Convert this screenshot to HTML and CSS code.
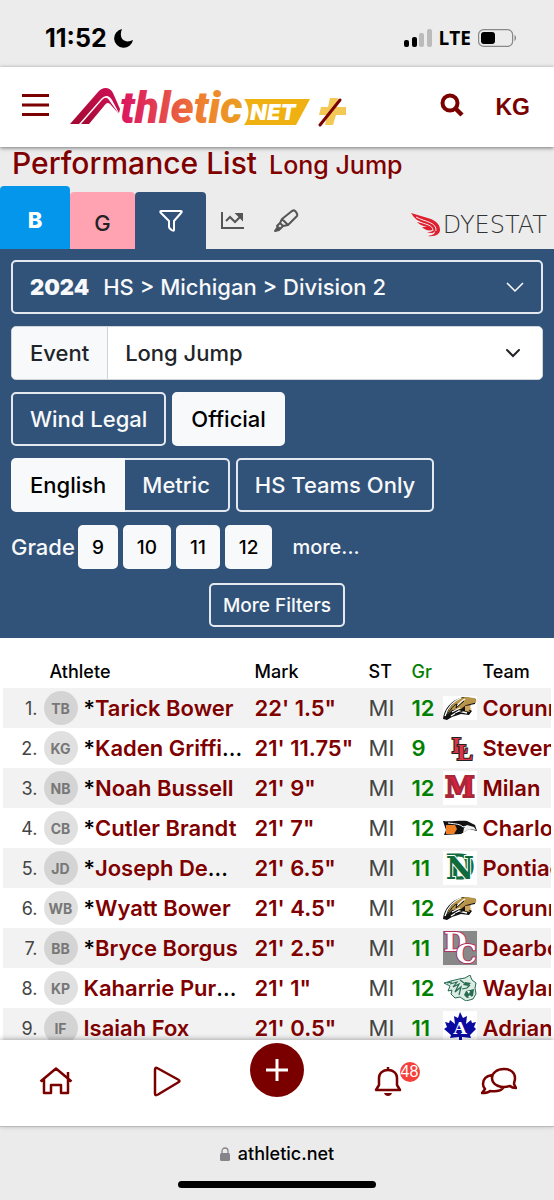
FILE: index.html
```html
<!DOCTYPE html>
<html lang="en">
<head>
  <meta charset="UTF-8">
  <meta name="viewport" content="width=device-width, initial-scale=1">
  <title>Performance List - Long Jump</title>
  <link rel="stylesheet" href="styles.css">
</head>
<body>

  <!-- shared team logos -->
  <svg class="defs" width="0" height="0" aria-hidden="true">
    <symbol id="cavalier" viewBox="0 0 34 24">
      <path fill="#fff" d="M0 0h34v24H0z"/>
      <path fill="#111" d="M0 23C1 13 8 4 20 1l8 1 5 1-1 5-5 1-1 4 3 2-3 4-8-1-9 3-5 3z"/>
      <path fill="#b8954a" d="M9 9c4-5 8-7 14-8l8 1c3 1 3 5 0 5l-8 2-5 4-9 1-5 5c1-4 2-7 5-10z"/>
      <path fill="none" stroke="#fff" stroke-width="1.3" d="M2 20C5 10 10 5 18 2M14 10c3-4 6-6 8-7M9 16l8-4M8 20l8-5 8 2"/>
      <path fill="#c9a45a" d="M22 10l6-1-1 3 2 1-3 1 1 2-5-1z"/>
      <path fill="none" stroke="#111" stroke-width="1" d="M3 21C8 12 11 9 14 8l-1 4 8-7M12 18l10-4"/>
    </symbol>
  </svg>

  <div class="status-bar">
    <div class="clock">11:52
      <svg width="20" height="20" viewBox="0 0 20 20"><path d="M8 1C4 11 11 16 19 12A9.500 9.500 0 1 1 8 1z"/></svg>
    </div>
    <div class="signal">
      <svg width="28" height="18" viewBox="0 0 28 18">
        <rect x="0" y="11" width="5" height="7" rx="2"/>
        <rect x="8" y="8" width="5" height="10" rx="2"/>
        <rect x="15" y="4" width="5" height="14" rx="2" fill="#bbb"/>
        <rect x="23" y="0" width="5" height="18" rx="2" fill="#bbb"/>
      </svg>
      <span>LTE</span>
      <svg width="39" height="18" viewBox="0 0 39 18">
        <rect x=".6" y=".6" width="34" height="16.800" rx="5" fill="none" stroke="#888" stroke-width="1.200"/>
        <rect x="3" y="3" width="14" height="12" rx="3"/>
        <path d="M36.500 6v6c2-1 2-5 0-6z" fill="#888"/>
      </svg>
    </div>
  </div>

  <header class="top-bar">
    <button class="icon-btn" aria-label="Menu">
      <svg width="27" height="24" viewBox="0 0 27 24"><path d="M0 2.500h27M0 12h27M0 21.500h27" stroke="#7a0000" stroke-width="3"/></svg>
    </button>
    <a class="logo" href="#" aria-label="Athletic.net">
      <svg width="278" height="42" viewBox="0 0 278 42">
        <defs>
          <linearGradient id="word" gradientUnits="userSpaceOnUse" x1="50" y1="0" x2="176" y2="0">
            <stop offset="0" stop-color="#dc1262"/>
            <stop offset=".35" stop-color="#e5484c"/>
            <stop offset=".65" stop-color="#ef8030"/>
            <stop offset="1" stop-color="#eaa31e"/>
          </linearGradient>
          <linearGradient id="mark" x1="0" y1="1" x2="1" y2="0">
            <stop offset="0" stop-color="#a00a32"/>
            <stop offset="1" stop-color="#d01056"/>
          </linearGradient>
        </defs>
        <path fill="url(#mark)" d="M0 38 28 6c5-6 12-5 15 1l7 16-1 4-7-13c-3-5-7-5-11-1L9 38z"/>
        <path fill="url(#mark)" d="M11 38 32 14c3-3 5-3 7 0l10 14-9-10c-2-2-4-1-6 2L19 38z"/>
        <text class="logo-word" x="50" y="37" fill="url(#word)">thletic</text>
        <path fill="#eeb111" d="M174 13h66l-14 26h-52c6-8 6-18 0-26z"/>
        <text class="logo-net" x="180" y="34">NET</text>
        <path fill="#f3c855" d="M260 12h8l-1 9h9v8h-10l-3 10h-8l2-10h-8l2-8h7z"/>
        <path d="M250 39 270 14" stroke="#7a0000" stroke-width="3" stroke-linecap="round"/>
      </svg>
    </a>
    <button class="icon-btn search" aria-label="Search">
      <svg width="24" height="24" viewBox="0 0 24 24" fill="none" stroke="#7a0000"><circle cx="10" cy="10" r="7.500" stroke-width="4"/><path d="m16 16 6 6" stroke-width="4.500"/></svg>
    </button>
    <button class="user">KG</button>
  </header>

  <main>
    <h1>Performance List <small>Long Jump</small></h1>

    <nav class="tabs">
      <a class="tab boys" href="#">B</a>
      <a class="tab girls" href="#">G</a>
      <a class="tab filter" href="#" aria-label="Filters">
        <svg width="24" height="24" viewBox="0 0 24 24" fill="none" stroke="#fff" stroke-width="2" stroke-linejoin="round"><path d="M2 2h20c1 0 1 1 0 2l-7 8v9c0 2-5-1-5-3v-6L2 4C1 3 1 2 2 2z"/></svg>
      </a>
      <a class="tab plain" href="#" aria-label="Progress">
        <svg width="24" height="20" viewBox="0 0 24 20" fill="none" stroke="#555" stroke-width="2"><path d="M1 1v16h22M5 10l4-4 5 5 6-6"/><path d="M16 3h5v5z" fill="#555"/></svg>
      </a>
      <a class="tab plain" href="#" aria-label="Highlight">
        <svg width="26" height="24" viewBox="0 0 26 24" fill="none" stroke="#555" stroke-width="2" stroke-linejoin="round"><path d="M8 10 18 2c2-1 3-1 4 1s2 2 1 4l-9 9-5 1-3-3zM8 10l6 6M6 14l-3 3 3 3 3-3"/><path d="m1 22 2-3 2 2z" fill="#555"/></svg>
      </a>
      <a class="dyestat" href="#">
        <svg width="29" height="24" viewBox="0 0 29 24" aria-hidden="true">
          <path fill="#e01f2e" d="M0 0 20 6c7 3 9 7 9 11 0 4-5 7-12 6 5-1 7-2 7-5-1 2-4 3-8 1 3 0 5 0 6-2-5 1-8 0-11-3h5C11 13 8 11 6 9l5 1C7 8 3 5 0 0z"/>
          <path fill="none" stroke="#ececec" d="M5 4c9 5 21 5 20 14M7 8c7 4 15 3 15 10"/>
        </svg>
        <span>DYESTAT</span>
      </a>
    </nav>

    <section class="filters">
      <button class="btn division"><b>2024</b> HS &gt; Michigan &gt; Division 2
        <svg width="18" height="11" viewBox="0 0 18 11" fill="none" stroke="#fff" stroke-width="1.500"><path d="m1 1 8 8 8-8"/></svg>
      </button>
      <div class="event">
        <label for="event">Event</label>
        <select id="event"><option>Long Jump</option></select>
      </div>
      <div class="row">
        <button class="btn">Wind Legal</button>
        <button class="btn active">Official</button>
      </div>
      <div class="row">
        <div class="group">
          <button class="btn active">English</button>
          <button class="btn">Metric</button>
        </div>
        <button class="btn">HS Teams Only</button>
      </div>
      <div class="row grades">
        <span>Grade</span>
        <button class="btn small active">9</button>
        <button class="btn small active">10</button>
        <button class="btn small active">11</button>
        <button class="btn small active">12</button>
        <a href="#">more...</a>
      </div>
      <button class="btn small more-filters">More Filters</button>
    </section>

    <table class="results">
      <colgroup>
        <col class="c-rank"><col class="c-avatar"><col class="c-name"><col class="c-mark"><col class="c-state"><col class="c-grade"><col class="c-logo"><col>
      </colgroup>
      <thead>
        <tr><th></th><th colspan="2" class="athlete">Athlete</th><th>Mark</th><th>ST</th><th class="gr">Gr</th><th></th><th>Team</th></tr>
      </thead>
      <tbody>
        <tr>
          <td class="rank">1.</td><td><span class="avatar">TB</span></td><td>*<a href="#">Tarick Bower</a></td><td><a href="#">22' 1.5"</a></td><td class="st">MI</td><td class="gr">12</td>
          <td><svg width="34" height="24"><use href="#cavalier"/></svg></td><td><a href="#">Corunna</a></td>
        </tr>
        <tr>
          <td class="rank">2.</td><td><span class="avatar">KG</span></td><td>*<a href="#">Kaden Griffi</a>...</td><td><a href="#">21' 11.75"</a></td><td class="st">MI</td><td class="gr">9</td>
          <td><svg width="34" height="34" viewBox="0 0 34 34"><g class="ll"><text x="9" y="22">L</text><text x="14" y="29">L</text></g></svg></td><td><a href="#">Stevensville</a></td>
        </tr>
        <tr>
          <td class="rank">3.</td><td><span class="avatar">NB</span></td><td>*<a href="#">Noah Bussell</a></td><td><a href="#">21' 9"</a></td><td class="st">MI</td><td class="gr">12</td>
          <td><svg width="34" height="34" viewBox="0 0 34 34"><path fill="#fff" d="M0 0h34v34H0z"/><text class="block-m" x="17" y="26">M</text></svg></td><td><a href="#">Milan</a></td>
        </tr>
        <tr>
          <td class="rank">4.</td><td><span class="avatar">CB</span></td><td>*<a href="#">Cutler Brandt</a></td><td><a href="#">21' 7"</a></td><td class="st">MI</td><td class="gr">12</td>
          <td><svg width="34" height="16" viewBox="0 0 34 16"><path fill="#111" d="M0 1c9 1 17-1 24 0l8 4 2 6-8-2-8 5-17 1 2-5z"/><path fill="#ee7f22" d="m3 5 9 0 2 4-3 5-8 0z"/><path fill="#eee" d="m24 5 7 2 2 3-7-1-6 4 1-5z"/><path fill="none" stroke="#fff" d="M5 3c8 1 12 1 15 4l4-1"/></svg></td><td><a href="#">Charlotte</a></td>
        </tr>
        <tr>
          <td class="rank">5.</td><td><span class="avatar">JD</span></td><td>*<a href="#">Joseph De</a>...</td><td><a href="#">21' 6.5"</a></td><td class="st">MI</td><td class="gr">11</td>
          <td><svg width="34" height="34" viewBox="0 0 34 34"><path fill="#fff" d="M0 0h34v34H0z"/><g class="nd"><text class="d" x="17" y="28">D</text><text class="n" x="17" y="28">N</text></g></svg></td><td><a href="#">Pontiac</a></td>
        </tr>
        <tr>
          <td class="rank">6.</td><td><span class="avatar">WB</span></td><td>*<a href="#">Wyatt Bower</a></td><td><a href="#">21' 4.5"</a></td><td class="st">MI</td><td class="gr">12</td>
          <td><svg width="34" height="24"><use href="#cavalier"/></svg></td><td><a href="#">Corunna</a></td>
        </tr>
        <tr>
          <td class="rank">7.</td><td><span class="avatar">BB</span></td><td>*<a href="#">Bryce Borgus</a></td><td><a href="#">21' 2.5"</a></td><td class="st">MI</td><td class="gr">11</td>
          <td><svg width="34" height="34" viewBox="0 0 34 34"><path fill="#888" d="M0 0h34v34H0z"/><g class="dc"><text x="1" y="20">D</text><text x="13" y="32">C</text></g></svg></td><td><a href="#">Dearborn</a></td>
        </tr>
        <tr>
          <td class="rank">8.</td><td><span class="avatar">KP</span></td><td><a href="#">Kaharrie Pur</a>...</td><td><a href="#">21' 1"</a></td><td class="st">MI</td><td class="gr">12</td>
          <td><svg width="34" height="26" viewBox="0 0 34 26"><path fill="#dcebe4" stroke="#276b50" d="m1 8 7-2 8-2 6-1 5-3 2 5 4 3-1 5 1 6-3 5-7 2-6-4-5 1-4-4 1-4-4 1 2-5z"/><path fill="#276b50" d="m22 7 6 1-3 3-5-1zM23 16l8-2-1 7-6 2-3-3z"/><path fill="none" stroke="#276b50" stroke-width="1.200" d="m7 9 7-2-4 5 6-3-4 8 6-5-2 8M17 5l4 3M19 14l5-1 3-3M4 8l5-1"/><path fill="#fff" d="m24 16 2 3 1-3zM25 22l2-2 1 2z"/></svg></td><td><a href="#">Wayland</a></td>
        </tr>
        <tr>
          <td class="rank">9.</td><td><span class="avatar">IF</span></td><td><a href="#">Isaiah Fox</a></td><td><a href="#">21' 0.5"</a></td><td class="st">MI</td><td class="gr">11</td>
          <td><svg width="34" height="34" viewBox="0 0 34 34"><path fill="#fff" d="M0 0h34v34H0z"/><path fill="#0a0aa0" d="m17 1 3 6 4-2-1 8 5-4 1 3 4-1-2 5 2 2-6 6 1 3-9-1v6h-3v-6l-9 1 1-3-7-6 3-2-2-5 4 1 1-3 5 4-1-8 4 2z"/><text class="leaf-a" x="17" y="23">A</text></svg></td><td><a href="#">Adrian</a></td>
        </tr>
      </tbody>
    </table>
  </main>

  <nav class="bottom-nav">
    <a href="#" aria-label="Home"><svg width="34" height="28" viewBox="0 0 34 28"><path d="m1.500 14.500 15.500-13 15.500 13M5 12v14h7v-8h10v8h7V12M29 11V5"/></svg></a>
    <a href="#" aria-label="Watch"><svg width="28" height="31" viewBox="0 0 28 31"><path d="M2 3.500c0-2 1-2 3-1l20 11c2 1 2 2 0 3l-20 12c-2 1-3 1-3-1z"/></svg></a>
    <button class="add" aria-label="Add"><svg width="22" height="22" viewBox="0 0 22 22"><path d="M11 0v22M0 11h22"/></svg></button>
    <a href="#" class="bell" aria-label="Notifications"><svg width="28" height="31" viewBox="0 0 28 31"><path d="M14 1v3M2 24h24l-3-5v-7c0-5-4-8-9-8s-9 3-9 8v7z"/><path d="M10 27h8c-1 4-7 4-8 0z" fill="#7a0000" stroke="none"/></svg><span class="badge">48</span></a>
    <a href="#" aria-label="Messages"><svg width="36" height="28" viewBox="0 0 36 28"><path d="M23 2c7 0 11 4 11 9 0 3-1 4-1 6l2 4c-3 0-5-1-6-2-9 3-18-1-18-8 0-5 5-9 12-9zM11 8c-6 1-9 4-9 9 0 2 1 4 2 5l-3 4c4 0 6 0 8-2 6 1 11 0 14-4"/></svg></a>
  </nav>

  <footer class="browser-bar">
    <div class="address">
      <svg width="10" height="14" viewBox="0 0 10 14"><rect y="6" width="10" height="8" rx="1.500" fill="#85858a"/><path d="M2 7V4a3 3 0 0 1 6 0v3" fill="none" stroke="#85858a" stroke-width="1.300"/></svg>
      athletic.net
    </div>
    <div class="home-indicator"></div>
  </footer>

</body>
</html>
```
FILE: styles.css
```css
* {
  box-sizing: border-box;
}

body {
  margin: 0;
  height: 100vh;
  display: flex;
  flex-direction: column;
  font-family: Inter, "Liberation Sans", sans-serif;
  font-size: 22px;
  font-weight: 500;
  color: #111;
  background: #fff;
}

a {
  color: #800000;
  text-decoration: none;
}

button,
select {
  font: inherit;
  color: inherit;
}

svg {
  display: block;
  flex: none;
}

.defs {
  position: absolute;
}

/* Phone status bar */
.status-bar {
  flex: none;
  height: 67px;
  padding: 8px 37px 0 45px;
  display: flex;
  align-items: center;
  justify-content: space-between;
  background: #ececec;
  color: #000;
}

.clock,
.signal {
  display: flex;
  align-items: center;
  gap: 7px;
  font-weight: 700;
  font-size: 25px;
}

.signal {
  font-family: "Open Sans", sans-serif;
  font-size: 19px;
}

/* Site header */
.top-bar {
  flex: none;
  height: 80px;
  padding: 0 24px 0 22px;
  display: flex;
  align-items: center;
  background: #fff;
  box-shadow: 0 1px 4px rgba(0, 0, 0, 0.5);
  z-index: 1;
}

.icon-btn,
.user {
  padding: 0;
  border: 0;
  background: none;
  color: #7a0000;
}

.icon-btn {
  padding-bottom: 4px;
}

.user {
  margin-left: 32px;
  font: bold 23px "Liberation Sans", sans-serif;
}

.logo {
  margin-left: 21px;
}

.search {
  margin-left: auto;
}

.logo-word {
  font: italic 900 44px Roboto, sans-serif;
}

.logo-net {
  font: italic 900 22px Inter, sans-serif;
  fill: #fff;
}

main {
  flex: 1;
  min-height: 0;
  overflow: hidden;
  background: #ececec;
}

h1 {
  margin: 0;
  padding: 0 12px;
  height: 39px;
  font-size: 30px;
  font-weight: 500;
  line-height: 32px;
  color: #800000;
  white-space: nowrap;
}

h1 small {
  margin-left: 4px;
  font-size: 25px;
}

/* Tabs */
.tabs {
  display: flex;
  align-items: flex-end;
  height: 63px;
}

.tab {
  display: flex;
  align-items: center;
  justify-content: center;
  height: 57px;
  border-radius: 4px 4px 0 0;
}

.boys {
  width: 70px;
  height: 63px;
  padding-top: 4px;
  background: #0396ea;
  color: #fff;
  font-weight: 800;
}

.girls {
  width: 65px;
  padding-top: 4px;
  background: #ffa3b3;
  color: #222;
}

.filter {
  width: 71px;
  background: #325379;
}

.plain {
  width: 54px;
}

.dyestat {
  display: flex;
  align-items: center;
  gap: 3px;
  height: 48px;
  margin-left: auto;
  padding-right: 7px;
  color: #333;
  font-family: "DejaVu Sans", sans-serif;
  font-size: 24px;
  font-weight: 200;
}

/* Filter panel */
.filters {
  display: flex;
  flex-direction: column;
  gap: 12px;
  padding: 11px;
  background: #325379;
  color: #f8f9fa;
}

.btn {
  height: 54px;
  padding: 0 17px;
  border: 2px solid #e4e9ef;
  border-radius: 5px;
  background: transparent;
  white-space: nowrap;
}

.btn.active {
  border-color: #f8f9fa;
  background: #f8f9fa;
  color: #000;
}

.btn.small {
  height: 44px;
  padding: 0 12px;
  font-size: 19px;
}

.division {
  display: flex;
  align-items: center;
  gap: 14px;
}

.division b {
  font-weight: 900;
}

.division svg {
  margin-left: auto;
}

.event {
  display: flex;
  height: 54px;
  border: 1px solid #ced4da;
  border-radius: 5px;
  background: #fff;
  color: #212529;
  overflow: hidden;
}

.event label {
  display: flex;
  align-items: center;
  padding: 0 18px;
  border-right: 1px solid #ced4da;
  background: #f8f9fa;
}

.event select {
  flex: 1;
  padding: 0 17px;
  border: 0;
  appearance: none;
  background: #fff url("data:image/svg+xml,%3Csvg xmlns='http://www.w3.org/2000/svg' width='16' height='10' fill='none' stroke='%23212529' stroke-width='2' stroke-linecap='round'%3E%3Cpath d='m2 2 6 6 6-6'/%3E%3C/svg%3E") no-repeat right 21px center;
}

.row {
  display: flex;
  align-items: center;
  gap: 6px;
}

.group {
  display: flex;
}

.group .btn:first-child {
  border-radius: 5px 0 0 5px;
}

.group .btn:last-child {
  padding-right: 18px;
  border-left: 0;
  border-radius: 0 5px 5px 0;
}

.grades {
  margin-top: 1px;
  gap: 5px;
}

.grades span {
  margin-right: -2px;
}

.grades a {
  margin-left: 15px;
  color: inherit;
  font-size: 20px;
}

.more-filters {
  align-self: center;
  margin-top: 2px;
}

/* Results */
.results {
  width: 100%;
  table-layout: fixed;
  border-collapse: collapse;
  background: #fff;
  border: solid #fff;
  border-width: 0 3px;
  color: #000;
}

.c-rank { width: 42px; }
.c-avatar { width: 40px; }
.c-name { width: 171px; }
.c-mark { width: 114px; }
.c-state { width: 43px; }
.c-grade { width: 31px; }
.c-logo { width: 40px; }

.results th {
  height: 50px;
  padding: 16px 0 0;
  font-size: 18px;
  font-weight: 500;
  text-align: left;
}

.results th.athlete {
  padding-left: 6px;
}

.results td {
  height: 40px;
  padding: 0;
  overflow: hidden;
  white-space: nowrap;
}

.results td a,
.results td.gr {
  font-weight: 600;
}

.results tbody tr:nth-child(odd) {
  background: #f2f2f2;
}

.results td.rank {
  padding-right: 6px;
  font-size: 18px;
  font-weight: 400;
  color: #444;
  text-align: right;
}

.results .st {
  font-weight: 400;
  color: #444;
}

.results .gr {
  color: #008000;
}

.avatar {
  display: flex;
  align-items: center;
  justify-content: center;
  width: 34px;
  height: 34px;
  border-radius: 50%;
  background: rgba(0, 0, 0, 0.12);
  color: #777;
  font-size: 14px;
  font-weight: 700;
}

/* Team logo lettering */
.ll {
  font: bold 24px "Liberation Serif", serif;
  fill: #dc3545;
  stroke: #222;
  stroke-width: 2px;
  paint-order: stroke;
}

.block-m {
  font: bold 27px "DejaVu Serif", serif;
  fill: #d8203c;
  stroke: #a8283a;
  stroke-width: 2px;
  text-anchor: middle;
}

.nd {
  font-family: "DejaVu Serif", serif;
  font-weight: bold;
  fill: #0f6b3c;
  text-anchor: middle;
}

.nd .d {
  font-size: 33px;
  stroke: #0f6b3c;
}

.nd .n {
  font-size: 31px;
  stroke: #fff;
  stroke-width: 2px;
  paint-order: stroke;
}

.dc {
  font: bold 26px "DejaVu Serif", serif;
  fill: #fff;
  stroke: #b03060;
  stroke-width: 2px;
  paint-order: stroke;
}

.leaf-a {
  font: bold 17px "DejaVu Serif", serif;
  fill: #fff;
  text-anchor: middle;
}

/* Bottom navigation */
.bottom-nav {
  flex: none;
  height: 87px;
  padding-bottom: 4px;
  display: flex;
  align-items: center;
  background: #fff;
  border-bottom: 1px solid #bbb;
  box-shadow: 0 -1px 5px rgba(0, 0, 0, 0.3);
  z-index: 1;
}

.bottom-nav > * {
  flex: 1;
  display: flex;
  justify-content: center;
}

.bottom-nav svg {
  fill: none;
  stroke: #7a0000;
  stroke-width: 2.5px;
  stroke-linejoin: round;
}

.bottom-nav .add {
  flex: none;
  width: 54px;
  height: 54px;
  margin: 0 28px 22px;
  padding: 0;
  align-items: center;
  border: 0;
  border-radius: 50%;
  background: #7a0000;
}

.bottom-nav .add svg {
  stroke: #fff;
  stroke-width: 3px;
}

.bell {
  position: relative;
}

.badge {
  position: absolute;
  left: 50%;
  top: -4px;
  width: 20px;
  height: 20px;
  margin-left: 12px;
  border-radius: 50%;
  background: #f43f3a;
  color: #fff;
  font: 16px/20px "Liberation Sans", sans-serif;
  text-align: center;
}

/* Browser address bar */
.browser-bar {
  flex: none;
  height: 73px;
  padding: 16px 0 12px;
  display: flex;
  flex-direction: column;
  align-items: center;
  justify-content: space-between;
  background: #ecebec;
  color: #000;
}

.address {
  display: flex;
  align-items: center;
  gap: 8px;
  font-size: 18px;
}

.home-indicator {
  width: 198px;
  height: 7px;
  border-radius: 4px;
  background: #000;
}
```
